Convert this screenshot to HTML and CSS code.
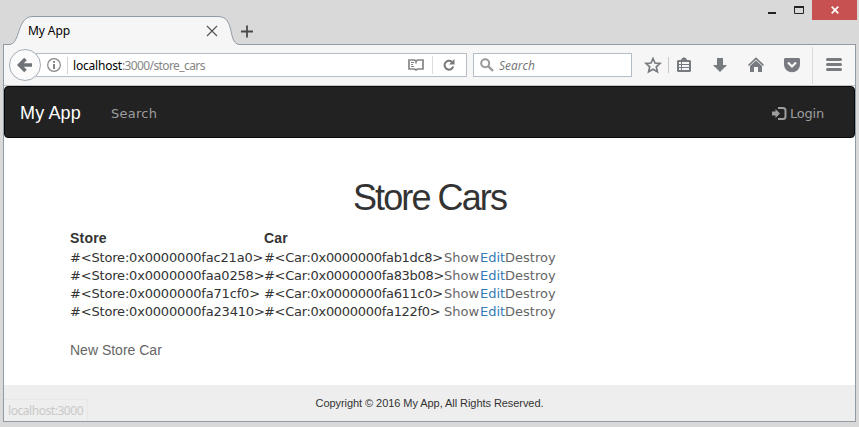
FILE: index.html
```html
<!DOCTYPE html>
<html lang="en">
<head>
<meta charset="utf-8">
<title>My App</title>
<link rel="stylesheet" href="styles.css">
</head>
<body>
<header class="titlebar">
  <div class="tab">
    <svg class="tab-shape" width="238" height="30" viewBox="0 0 238 30"><path d="M0 30V28.500H5C17 28.500 12 .5 29 .5H214C232 .5 223 28.500 236 28.500H238V30Z" fill="#f6f6f6"/><path d="M0 28.500H5C17 28.500 12 .5 29 .5H214C232 .5 223 28.500 236 28.500H238" fill="none" stroke="#929ba4"/></svg>
    <span class="tab-title">My App</span>
    <svg class="tab-close" width="12" height="12" viewBox="0 0 12 12"><path d="M1 1l10 10M11 1L1 11" stroke="#555" stroke-width="1.200"/></svg>
  </div>
  <svg class="tab-new" width="13" height="13" viewBox="0 0 13 13"><path d="M0 6.500h12M6 .5v12" stroke="#4a4a4a" stroke-width="1.800"/></svg>
  <div class="controls">
    <svg width="46" height="20" viewBox="0 0 46 20"><path d="M2 12h8v2H2z" fill="#222"/><path d="M28.500 7v6.500h9V7" fill="none" stroke="#222"/><path d="M28 6h10v2H28z" fill="#222"/></svg>
    <span class="close"><svg width="8" height="8" viewBox="0 0 8 8"><path d="M.7.7l6.600 6.600M7.300.7L.7 7.300" stroke="#fff" stroke-width="1.700"/></svg></span>
  </div>
</header>
<div class="window">
  <div class="toolbar">
    <div class="back"><svg width="16" height="16" viewBox="0 0 16 16"><path d="M8.500 2L2.500 8l6 6M3 8h12" fill="none" stroke="#6f7377" stroke-width="3.600"/></svg></div>
    <div class="urlbar">
      <svg class="info" width="14" height="14" viewBox="0 0 14 14"><circle cx="7" cy="7" r="6.300" fill="none" stroke="#858585" stroke-width="1.200"/><path d="M6 3h2v1.700H6zM6 6h2v5H6z" fill="#858585"/></svg>
      <span class="url"><b>localhost</b>:3000/store_cars</span>
      <svg class="reader" width="16" height="14" viewBox="0 0 16 14"><path d="M1 2h5.500L8 3l1.500-1H15v9H9.500L8 12l-1.500-1H1z" fill="none" stroke="#858585" stroke-width="1.700"/><path d="M8 3v2.500" stroke="#858585" stroke-width="1.500"/><path d="M3 4.500h3M3 6.500h2M3 8.500h3" stroke="#858585"/></svg>
      <span class="reload"><svg width="12" height="12" viewBox="0 0 12 12"><path d="M9 3A4.400 4.400 0 1 0 10.200 7.500" fill="none" stroke="#777" stroke-width="2"/><path d="M11.500 0v5.500H6z" fill="#777"/></svg></span>
    </div>
    <div class="search">
      <svg width="14" height="14" viewBox="0 0 14 14"><circle cx="5.200" cy="5.200" r="4" fill="none" stroke="#999" stroke-width="2"/><path d="M8 8l5 5" stroke="#999" stroke-width="2.400"/></svg>
      <span>Search</span>
    </div>
    <svg class="actions" width="214" height="40" viewBox="0 0 214 40">
      <path d="M13 13.500l2 4.500 5 .5-3.700 3.400 1.100 4.900-4.400-2.500-4.400 2.500 1.100-4.900L6 18.500l5-.5z" fill="none" stroke="#777b80" stroke-width="1.700"/>
      <path d="M28.500 12v16" stroke="#c4c8cb"/>
      <g fill="#777b80"><path d="M41 15l1-2h1l1-1 1 1h1l1 2h3l1 1v10l-1 1H38l-1-1V16l1-1z"/><path d="M39 17h2v2h-2zM42 17h7v2h-7zM39 20h2v2h-2zM42 20h7v2h-7zM39 23h2v2h-2zM42 23h7v2h-7z" fill="#f6f6f6"/>
      <path d="M77 13h6v7h4l-7 7-7-7h4z"/>
      <path d="M110 21l6-5.500 6 5.500v6h-4v-5h-4v5h-4z"/><path d="M108.500 20.500l7.500-7 7.500 7" fill="none" stroke="#777b80" stroke-width="1.700"/>
      <path d="M145 13h14l1 1v5c0 11-16 11-16 0v-5z"/></g>
      <path d="M148 17.500l4 4 4-4" fill="none" stroke="#f6f6f6" stroke-width="2.200"/>
      <path d="M172.500 2v37" stroke="#dadada"/>
      <path d="M187.500 14.500h13M187.500 19.500h13M187.500 24.500h13" stroke="#777b80" stroke-width="3" stroke-linecap="round"/>
    </svg>
  </div>
  <nav class="navbar">
    <a class="brand">My App</a><a class="nav-search">Search</a>
    <a class="login"><svg width="15" height="13" viewBox="0 0 15 13"><path d="M0 4.500h3.500V2L8 6.500 3.500 11V8.500H0z" fill="#9d9d9d"/><path d="M6 1h5Q13.500 1 13.500 3.500v6Q13.500 12 11 12H6" fill="none" stroke="#9d9d9d" stroke-width="2"/></svg><span>Login</span></a>
  </nav>
  <main>
    <h1><span>Store Cars</span></h1>
    <table>
      <thead><tr><th class="c-store">Store</th><th class="c-car">Car</th><th class="c-show"></th><th class="c-edit"></th><th class="c-del"></th></tr></thead>
      <tbody>
        <tr><td>#&lt;Store:0x0000000fac21a0&gt;</td><td>#&lt;Car:0x0000000fab1dc8&gt;</td><td><a>Show</a></td><td><a class="edit">Edit</a></td><td><a>Destroy</a></td></tr>
        <tr><td>#&lt;Store:0x0000000faa0258&gt;</td><td>#&lt;Car:0x0000000fa83b08&gt;</td><td><a>Show</a></td><td><a class="edit">Edit</a></td><td><a>Destroy</a></td></tr>
        <tr><td>#&lt;Store:0x0000000fa71cf0&gt;</td><td>#&lt;Car:0x0000000fa611c0&gt;</td><td><a>Show</a></td><td><a class="edit">Edit</a></td><td><a>Destroy</a></td></tr>
        <tr><td>#&lt;Store:0x0000000fa23410&gt;</td><td>#&lt;Car:0x0000000fa122f0&gt;</td><td><a>Show</a></td><td><a class="edit">Edit</a></td><td><a>Destroy</a></td></tr>
      </tbody>
    </table>
    <a class="new-link">New Store Car</a>
  </main>
  <footer><span>Copyright © 2016 My App, All Rights Reserved.</span>
    <div class="status">localhost:3000</div>
  </footer>
</div>
</body>
</html>
```
FILE: styles.css
```css
* { box-sizing: border-box; }
body { margin: 0; height: 427px; overflow: hidden; background: #d9d9d9; font-family: "Liberation Sans", Arial, sans-serif; color: #333; }
svg { display: block; flex: none; }
.titlebar { height: 44px; display: flex; align-items: flex-start; }
.tab { position: relative; z-index: 1; width: 238px; height: 30px; margin: 16px 0 0 4px; display: flex; align-items: center; padding: 0 24px 0 24px; }
.tab-shape { position: absolute; left: 0; top: 0; }
.tab-title { position: relative; font: 12px/16px "Noto Sans", sans-serif; color: #000; letter-spacing: -.1px; }
.tab-close { position: relative; margin-left: auto; }
.tab-new { margin: 25px 0 0 -1px; }
.controls { margin-left: auto; display: flex; padding-right: 2px; }
.close { width: 45px; height: 20px; background: #c75050; display: flex; align-items: center; justify-content: center; }
.window { width: 853px; height: 378px; margin-left: 3px; border: 1px solid #929ba4; background: #fff; }
.toolbar { height: 41px; background: #f6f6f6; border-bottom: 1px solid #c2c5c7; display: flex; align-items: center; padding-left: 5px; }
.back { width: 32px; height: 32px; border: 1px solid #a5aeb8; border-radius: 50%; background: #fbfbfb; display: flex; align-items: center; justify-content: center; z-index: 1; }
.urlbar { width: 431px; height: 24px; margin-left: -5px; border: 1px solid #b5bec8; background: #fff; display: flex; align-items: center; padding-left: 10px; }
.url { margin-left: 6px; border-left: 1px solid #d5d5d5; padding-left: 5px; font: 12px/17px "Noto Sans", sans-serif; letter-spacing: -.6px; color: #858585; }
.url b { font-weight: 400; letter-spacing: -.2px; color: #000; }
.reader { margin-left: auto; }
.reload { margin-left: 8px; padding: 3px 11px 3px 10px; border-left: 1px solid #ddd; }
.search { width: 159px; height: 24px; margin-left: 6px; border: 1px solid #b5bec8; background: #fff; display: flex; align-items: center; gap: 5px; padding-left: 6px; font: italic 12px/16px "Open Sans", sans-serif; color: #737373; }
.search span { padding-top: 2px; }
.actions { margin-left: 8px; }
.navbar { height: 52px; background: #222; border: 1px solid #080808; border-radius: 4px; display: flex; align-items: center; padding: 3px 30px 0 15px; color: #9d9d9d; font: 13px/20px "DejaVu Sans", Verdana, sans-serif; }
.brand { font: 18px/20px "Liberation Sans", Arial, sans-serif; letter-spacing: .15px; color: #fff; width: 91px; padding-bottom: 2px; }
.nav-search { letter-spacing: .25px; }
.login { margin-left: auto; display: flex; align-items: center; gap: 3px; letter-spacing: -.2px; }
main { height: 247px; padding: 40px 66px 0; }
h1 { margin: 0; height: 50px; font-size: 36px; line-height: 40px; font-weight: 400; letter-spacing: -1.900px; text-align: center; }
table { width: 486px; table-layout: fixed; border-collapse: collapse; font: 13px/18px "DejaVu Sans", Verdana, sans-serif; }
th, td { padding: 0; height: 18px; text-align: left; white-space: nowrap; }
td:nth-child(1) { letter-spacing: -.18px; }
td:nth-child(2) { letter-spacing: -.3px; }
th { height: 21px; line-height: 20px; font-family: "Liberation Sans", Arial, sans-serif; font-size: 14px; letter-spacing: .2px; }
thead th { padding-bottom: 1px; }
.c-store { width: 194px; }
.c-car { width: 180px; }
.c-show { width: 36px; }
.c-edit { width: 25px; }
td a { color: #666; }
td .edit { color: #337ab7; }
.new-link { display: block; margin-top: 19px; font-size: 14px; line-height: 20px; color: #666; }
footer { height: 36px; position: relative; background: #eee; text-align: center; font-size: 11px; line-height: 36px; letter-spacing: -.06px; }
.status { position: absolute; left: 0; bottom: 0; width: 84px; height: 22px; border: 1px solid #e7e7e7; border-width: 1px 1px 0 0; font: 12px/22px "Noto Sans", sans-serif; letter-spacing: -.45px; color: #c9c9c9; text-align: left; padding-left: 4px; }
```
